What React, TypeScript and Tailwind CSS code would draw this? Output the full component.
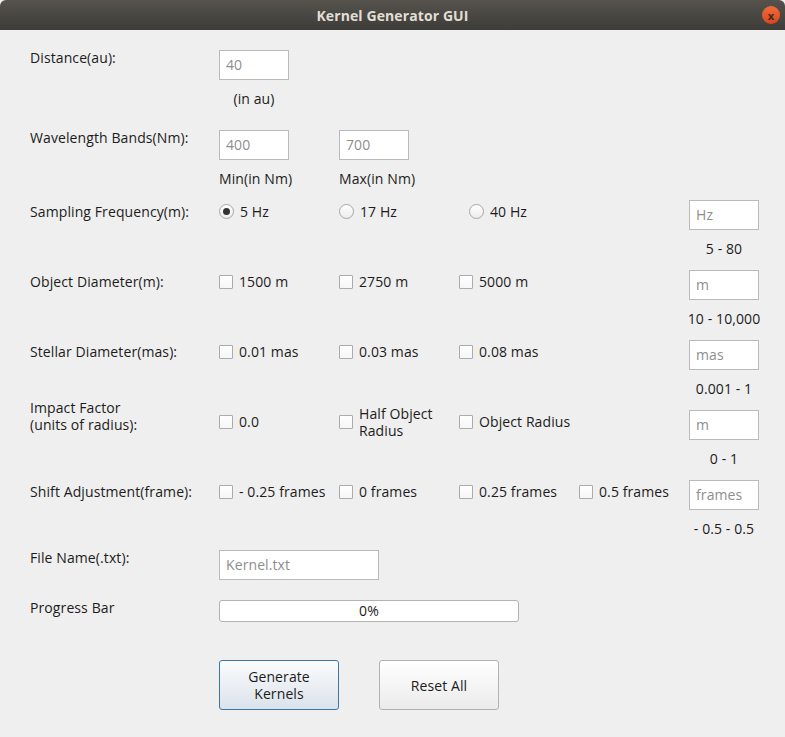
import type { ReactNode } from 'react'

const cols = 'grid grid-cols-[189px_120px_120px_120px_110px_70px]'

function TextField({ placeholder, className = 'w-[70px]' }: { placeholder: string; className?: string }) {
  return (
    <input
      readOnly
      placeholder={placeholder}
      className={`${className} h-[30px] border border-[#bababa] bg-white px-[6px] pb-[2px] text-[14px] outline-none placeholder:text-[#8e8e8e]`}
    />
  )
}

function Box() {
  return <span className="h-[14px] w-[14px] shrink-0 rounded-[1px] border border-[#ababab] bg-gradient-to-b from-white to-[#f6f6f6]" />
}

function Check({ label, offset = '' }: { label: ReactNode; offset?: string }) {
  return (
    <div className={`flex h-[23px] items-center gap-[6px] ${offset}`}>
      <Box />
      <span className="leading-[16px] whitespace-nowrap">{label}</span>
    </div>
  )
}

function Radio({ label, checked = false, offset = '' }: { label: string; checked?: boolean; offset?: string }) {
  return (
    <div className={`flex h-[23px] items-center gap-[6px] ${offset}`}>
      <span className="flex h-[15px] w-[15px] shrink-0 items-center justify-center rounded-full border border-[#a6a6a6] bg-gradient-to-b from-white to-[#ececec]">
        {checked && <span className="h-[7px] w-[7px] rounded-full bg-[#333333]" />}
      </span>
      <span className="leading-[16px] whitespace-nowrap">{label}</span>
    </div>
  )
}

function SubLabel({ children }: { children: ReactNode }) {
  return (
    <div className="flex h-[40px] justify-center pt-[11px] leading-[16px] whitespace-nowrap">{children}</div>
  )
}

export default function App() {
  return (
    <div className="h-[737px] w-[785px] overflow-hidden bg-[#efefef] font-['Open_Sans',sans-serif] text-[14px] tracking-[0.1px] text-[#1c1c1c]">
      <div className="relative flex h-[30px] items-center justify-center rounded-t-[6px] bg-gradient-to-b from-[#56534d] to-[#3d3c38]">
        <span className="text-[14px] font-bold text-[#e2ded6]">Kernel Generator GUI</span>
        <span className="absolute right-[5px] top-[6px] flex h-[18px] w-[18px] items-center justify-center rounded-full bg-gradient-to-b from-[#f26b3a] to-[#d8461c] text-[11px] font-bold leading-none text-[#3b2a22]">
          x
        </span>
      </div>

      <div className="px-[30px] pt-[20px]">
        {/* Distance */}
        <div className={`${cols} h-[30px]`}>
          <div className="leading-[16px]">Distance(au):</div>
          <TextField placeholder="40" />
        </div>
        <div className={`${cols} h-[50px]`}>
          <div />
          <div className="w-[70px]">
            <SubLabel>(in au)</SubLabel>
          </div>
        </div>

        {/* Wavelength */}
        <div className={`${cols} h-[30px]`}>
          <div className="leading-[16px]">Wavelength Bands(Nm):</div>
          <TextField placeholder="400" />
          <TextField placeholder="700" />
        </div>
        <div className={`${cols} h-[40px]`}>
          <div />
          <div className="pt-[11px] leading-[16px]">Min(in Nm)</div>
          <div className="pt-[11px] leading-[16px]">Max(in Nm)</div>
        </div>

        {/* Sampling */}
        <div className={`${cols} h-[30px]`}>
          <div className="pt-[4px] leading-[16px]">Sampling Frequency(m):</div>
          <Radio label="5 Hz" checked />
          <Radio label="17 Hz" />
          <Radio label="40 Hz" offset="ml-[10px]" />
          <div />
          <TextField placeholder="Hz" />
        </div>
        <div className={`${cols} h-[40px]`}>
          <div className="col-start-6">
            <SubLabel>5 - 80</SubLabel>
          </div>
        </div>

        {/* Object diameter */}
        <div className={`${cols} h-[30px]`}>
          <div className="pt-[4px] leading-[16px]">Object Diameter(m):</div>
          <Check label="1500 m" />
          <Check label="2750 m" />
          <Check label="5000 m" />
          <div />
          <TextField placeholder="m" />
        </div>
        <div className={`${cols} h-[40px]`}>
          <div className="col-start-6">
            <SubLabel>10 - 10,000</SubLabel>
          </div>
        </div>

        {/* Stellar diameter */}
        <div className={`${cols} h-[30px]`}>
          <div className="pt-[4px] leading-[16px]">Stellar Diameter(mas):</div>
          <Check label="0.01 mas" />
          <Check label="0.03 mas" />
          <Check label="0.08 mas" />
          <div />
          <TextField placeholder="mas" />
        </div>
        <div className={`${cols} h-[40px]`}>
          <div className="col-start-6">
            <SubLabel>0.001 - 1</SubLabel>
          </div>
        </div>

        {/* Impact factor */}
        <div className={`${cols} h-[30px]`}>
          <div className="mt-[-11px] leading-[17px]">
            Impact Factor
            <br />
            (units of radius):
          </div>
          <Check label="0.0" />
          <div className="flex h-[23px] items-center gap-[6px]">
            <Box />
            <span className="leading-[17px]">
              Half Object
              <br />
              Radius
            </span>
          </div>
          <Check label="Object Radius" />
          <div />
          <TextField placeholder="m" />
        </div>
        <div className={`${cols} h-[40px]`}>
          <div className="col-start-6">
            <SubLabel>0 - 1</SubLabel>
          </div>
        </div>

        {/* Shift */}
        <div className={`${cols} h-[30px]`}>
          <div className="pt-[4px] leading-[16px] whitespace-nowrap">Shift Adjustment(frame):</div>
          <Check label="- 0.25 frames" />
          <Check label="0 frames" />
          <Check label="0.25 frames" />
          <Check label="0.5 frames" />
          <TextField placeholder="frames" />
        </div>
        <div className={`${cols} h-[40px]`}>
          <div className="col-start-6">
            <SubLabel>- 0.5 - 0.5</SubLabel>
          </div>
        </div>

        {/* File name */}
        <div className={`${cols} h-[50px]`}>
          <div className="leading-[16px]">File Name(.txt):</div>
          <div className="col-span-2">
            <TextField placeholder="Kernel.txt" className="w-[160px]" />
          </div>
        </div>

        {/* Progress */}
        <div className={`${cols} h-[60px]`}>
          <div className="leading-[16px]">Progress Bar</div>
          <div className="col-span-3">
            <div className="flex h-[22px] w-[300px] items-center justify-center rounded-[3px] border border-[#b3b3b3] bg-white leading-[16px]">
              0%
            </div>
          </div>
        </div>

        {/* Buttons */}
        <div className="flex gap-[40px] pl-[189px]">
          <button
            type="button"
            className="flex h-[50px] w-[120px] flex-col items-center justify-center rounded-[3px] border border-[#3a77a8] bg-gradient-to-b from-[#fbfcfd] to-[#dbe2ea] leading-[17px] text-[#1c1c1c]"
          >
            <span>Generate</span>
            <span>Kernels</span>
          </button>
          <button
            type="button"
            className="flex h-[50px] w-[120px] items-center justify-center rounded-[3px] border border-[#b2b2b2] bg-gradient-to-b from-white to-[#ebebeb] text-[#1c1c1c]"
          >
            Reset All
          </button>
        </div>
      </div>
    </div>
  )
}
